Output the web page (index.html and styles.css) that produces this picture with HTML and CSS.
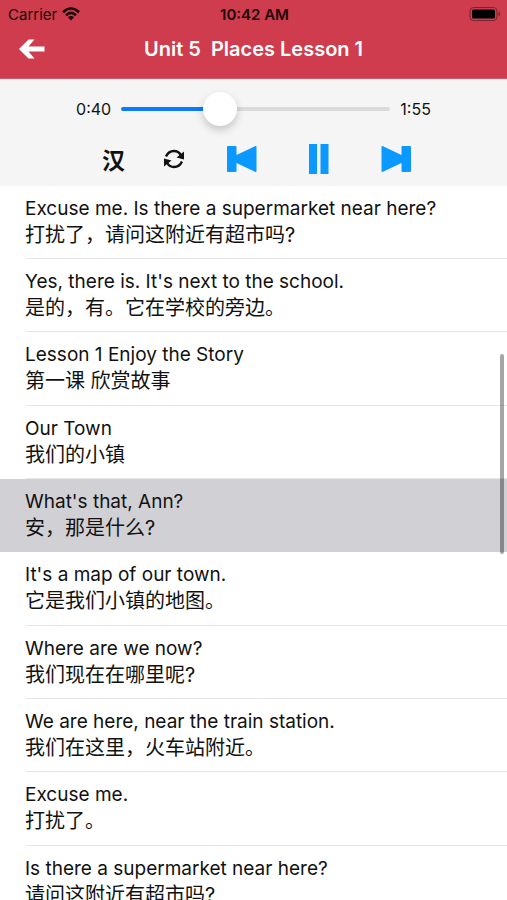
FILE: index.html
```html
<!DOCTYPE html>
<html lang="en">
<head>
<meta charset="utf-8">
<meta name="viewport" content="width=device-width, initial-scale=1">
<title>Unit 5 Places Lesson 1</title>
<link rel="stylesheet" href="styles.css">
</head>
<body>
<header class="header">
  <div class="status">
    <div class="carrier">Carrier
      <svg class="wifi" viewBox="0 0 18 14" aria-hidden="true"><path d="M1 5.200Q9-2.200 17 5.200M4 8.200Q9 3.600 14 8.200" fill="none" stroke="currentColor" stroke-width="2.600"/><path d="M5.900 10.200Q9 7.800 12.100 10.200L9 13.500Z" fill="currentColor"/></svg>
    </div>
    <div class="clock">10:42 AM</div>
    <svg class="battery" viewBox="0 0 32 14" aria-hidden="true"><rect x="1" y=".5" width="27" height="13" rx="3.500" fill="none" stroke="#000" stroke-opacity=".4"/><rect x="3" y="2.500" width="23" height="9" rx="1.500"/><path d="M29.500 4.500Q33 7 29.500 9.500Z" fill-opacity=".4"/></svg>
  </div>
  <nav class="nav">
    <a class="back" href="#" aria-label="Back"><svg viewBox="0 0 28 22" aria-hidden="true"><path d="M1 11 10.500 1.500H16.500L10.500 8.500H26.500V13.500H10.500L16.500 20.500H10.500Z"/></svg></a>
    <h1 class="title">Unit 5&nbsp; Places Lesson 1</h1>
  </nav>
</header>
<section class="player" aria-label="Player">
  <div class="timeline">
    <label class="time" for="seek">0:40</label>
    <input class="seek" id="seek" type="range" min="0" max="115" value="40">
    <span class="time">1:55</span>
  </div>
  <div class="controls">
    <div class="options">
      <button class="hanzi" type="button" lang="zh">汉</button>
      <button type="button" aria-label="Repeat"><svg width="24" height="24" viewBox="0 0 24 24" aria-hidden="true"><path d="M4 9.500Q6.500 4 12 4Q16.500 4 18.800 8M20 14.500Q17.500 20 12 20Q7.500 20 5.200 16" fill="none" stroke="#111" stroke-width="2.400"/><path d="M22 4.500V12.500L14.500 10.500ZM2 19.500V11.500L9.500 13.500Z" fill="#111"/></svg></button>
    </div>
    <div class="transport">
      <button type="button" aria-label="Previous"><svg width="32" height="32" viewBox="0 0 32 32" aria-hidden="true"><path d="M2 3H9.500Q10.500 3 10.500 4V12L29 3.200Q30.500 2.500 30.500 4V28Q30.500 29.500 29 28.800L10.500 20V28Q10.500 29 9.500 29H2Q1 29 1 28V4Q1 3 2 3Z"/></svg></button>
      <button type="button" aria-label="Pause"><svg width="32" height="32" viewBox="0 0 32 32" aria-hidden="true"><path d="M6 1H14V31H6ZM17.500 1H25.500V31H17.500Z"/></svg></button>
      <button type="button" aria-label="Next"><svg width="32" height="32" viewBox="0 0 32 32" aria-hidden="true"><path d="M30 3H22.500Q21.500 3 21.500 4V12L3 3.200Q1.500 2.500 1.500 4V28Q1.500 29.500 3 28.800L21.500 20V28Q21.500 29 22.500 29H30Q31 29 31 28V4Q31 3 30 3Z"/></svg></button>
    </div>
  </div>
</section>
<main class="transcript">
  <ul class="lines">
    <li><p>Excuse me. Is there a supermarket near here?</p><p lang="zh">打扰了，请问这附近有超市吗?</p></li>
    <li><p>Yes, there is. It's next to the school.</p><p lang="zh">是的，有。它在学校的旁边。</p></li>
    <li><p>Lesson 1 Enjoy the Story</p><p lang="zh">第一课 欣赏故事</p></li>
    <li><p>Our Town</p><p lang="zh">我们的小镇</p></li>
    <li class="current"><p>What's that, Ann?</p><p lang="zh">安，那是什么?</p></li>
    <li><p>It's a map of our town.</p><p lang="zh">它是我们小镇的地图。</p></li>
    <li><p>Where are we now?</p><p lang="zh">我们现在在哪里呢?</p></li>
    <li><p>We are here, near the train station.</p><p lang="zh">我们在这里，火车站附近。</p></li>
    <li><p>Excuse me.</p><p lang="zh">打扰了。</p></li>
    <li><p>Is there a supermarket near here?</p><p lang="zh">请问这附近有超市吗?</p></li>
  </ul>
  <div class="scrollbar"></div>
</main>
</body>
</html>
```

FILE: styles.css
```css
* { box-sizing: border-box; }

body {
  margin: 0;
  height: 100vh;
  display: flex;
  flex-direction: column;
  overflow: hidden;
  background: #fff;
  color: #111;
  font-family: Inter, "Noto Sans CJK SC", sans-serif;
}

h1, p, ul { margin: 0; padding: 0; }

.header { background: #cf3c4d; border-bottom: 1px solid #d9596a; }

.status {
  display: grid;
  grid-template-columns: 1fr auto 1fr;
  align-items: center;
  height: 28px;
  padding: 0 6px 0 8px;
  color: #1c0508;
  font-size: 15px;
}

.carrier { display: flex; align-items: center; gap: 5px; }
.wifi { width: 18px; height: 14px; }
.clock { font-weight: 600; }
.battery { width: 32px; height: 14px; justify-self: end; }

.nav {
  display: grid;
  grid-template-columns: 1fr auto 1fr;
  align-items: center;
  height: 50px;
  padding: 0 18px 8px;
  color: #fff;
}

.back { display: flex; width: 28px; }
.back svg { width: 28px; height: 22px; fill: #fff; }
.title { font-size: 20px; font-weight: 600; line-height: 28px; }

.player { padding: 12px 0 8px; background: #f5f5f5; }

.timeline {
  display: flex;
  align-items: center;
  justify-content: center;
  gap: 10px;
  width: 70%;
  height: 36px;
  margin: 0 auto;
}

.time { font-size: 16px; line-height: 24px; }

.seek {
  appearance: none;
  flex: 1;
  min-width: 0;
  height: 36px;
  margin: 0;
  background: transparent;
}

.seek::-webkit-slider-runnable-track {
  height: 4px;
  border-radius: 2px;
  background: linear-gradient(to right, #0a7aff 36%, #dadada 36%);
}

.seek::-webkit-slider-thumb {
  appearance: none;
  width: 34px;
  height: 34px;
  margin-top: -15px;
  border-radius: 50%;
  background: #fff;
  box-shadow: 0 4px 9px rgba(0, 0, 0, .2);
}

.controls {
  display: flex;
  justify-content: center;
  gap: 40px;
  height: 51px;
  padding: 12px 0 0 6px;
}

.options, .transport { display: flex; align-items: center; }
.options { gap: 36px; }
.transport { gap: 45px; }

.controls button {
  display: flex;
  padding: 0;
  border: 0;
  background: none;
  color: #111;
}

.transport svg { fill: #0b98ff; }

.controls .hanzi {
  width: 24px;
  justify-content: center;
  font: 700 23px/24px "Noto Sans CJK SC", sans-serif;
}

.transcript { position: relative; flex: 1; min-height: 0; overflow: hidden; }
.lines { list-style: none; }

.lines li {
  height: 73px;
  padding: 9px 25px;
  background: linear-gradient(#e6e6e6, #e6e6e6) 26px 100% / 100% 1px no-repeat;
}

.lines li:nth-child(3n) { height: 74px; }
.lines .current { background: #d1d0d5; }
.lines p { font-size: 19px; line-height: 27px; }
.lines p[lang="zh"] { font-size: 20px; }

.scrollbar {
  position: absolute;
  top: 168px;
  right: 3px;
  width: 4px;
  height: 28%;
  border-radius: 2px;
  background: rgba(0, 0, 0, .35);
}
```
